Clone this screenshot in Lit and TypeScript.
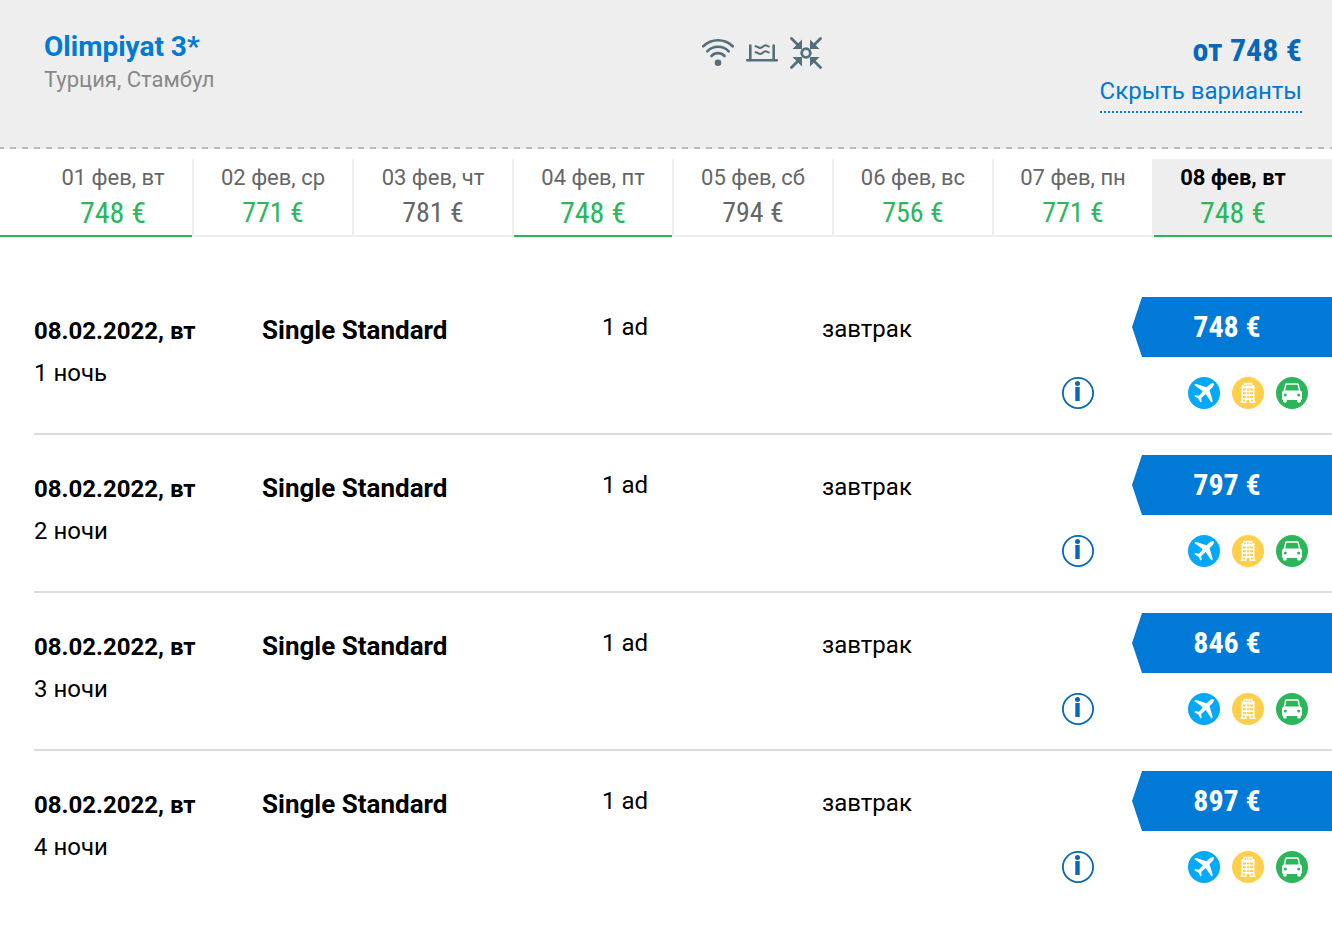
import { LitElement, html, css, svg } from "lit";
import { customElement } from "lit/decorators.js";
import { classMap } from "lit/directives/class-map.js";

interface Day {
  date: string;
  price: number;
  tone?: "low" | "best";
  active?: boolean;
}

const DAYS: Day[] = [
  { date: "01 фев, вт", price: 748, tone: "best" },
  { date: "02 фев, ср", price: 771, tone: "low" },
  { date: "03 фев, чт", price: 781 },
  { date: "04 фев, пт", price: 748, tone: "best" },
  { date: "05 фев, сб", price: 794 },
  { date: "06 фев, вс", price: 756, tone: "low" },
  { date: "07 фев, пн", price: 771, tone: "low" },
  { date: "08 фев, вт", price: 748, tone: "best", active: true },
];

const OFFERS = [
  { nights: "1 ночь", price: 748 },
  { nights: "2 ночи", price: 797 },
  { nights: "3 ночи", price: 846 },
  { nights: "4 ночи", price: 897 },
];

const wifi = svg`<svg viewBox="0 0 32 32" width="32" height="32" fill="none" stroke="#546e7a" stroke-width="2.6" stroke-linecap="round" role="img" aria-label="Wi-Fi">
  <path d="M1.3 9.3C9.5 1.3 22.500 1.300 30.700 9.300"/>
  <path d="M5.300 14.300C11.200 8.300 20.800 8.300 26.700 14.300"/>
  <path d="M9.500 19C13.200 15.200 18.800 15.200 22.500 19"/>
  <circle cx="16" cy="25.800" r="3.300" fill="#546e7a" stroke="none"/>
</svg>`;

const pool = svg`<svg viewBox="0 0 32 32" width="32" height="32" fill="none" stroke="#546e7a" stroke-width="2" stroke-linecap="round" role="img" aria-label="Бассейн">
  <path d="M1 23.300H31" stroke-width="2.400"/>
  <path d="M4.300 8.500V23M27.700 8.500V23" stroke-width="2.600"/>
  <path d="M9.500 9.200C12 9.200 12 11 14.200 11C17 11 17 8.200 19.500 8.200C21.500 8.200 21.500 9.500 22.800 9.500"/>
  <path d="M9.500 15.200C12 15.200 12 17 14.200 17C17 17 17 14.200 19.500 14.200C21.500 14.200 21.500 15.500 22.800 15.500"/>
</svg>`;

const center = svg`<svg viewBox="0 0 32 32" width="32" height="32" fill="none" stroke="#546e7a" stroke-width="2.800" stroke-linecap="round" role="img" aria-label="Центр">
  <circle cx="16" cy="16" r="4.300"/>
  <path d="M1.500 1.500L8 8M30.500 1.500L24 8M1.500 30.500L8 24M30.500 30.500L24 24"/>
  <path fill="#546e7a" stroke="none" d="M12 2.500V12H2.500ZM20 2.500V12H29.500ZM12 29.500V20H2.500ZM20 29.500V20H29.500Z"/>
</svg>`;

const plane = svg`<svg viewBox="0 0 32 32" width="32" height="32" role="img" aria-label="Перелёт">
  <circle cx="16" cy="16" r="16" fill="#03a9f9"/>
  <path fill="#fff" d="M25.700 6.200C24.500 5.600 22.600 6.500 21.300 7.800L18.600 10.300L7.500 6.700L6.300 8L14.800 14.200L11 18.800L7.400 18.100L6.300 19.200L10.300 21.600L12.600 25.600L13.700 24.500L13.200 20.900L17.700 17L23.400 25.500L24.800 24.300L21.600 13.200L24.200 10.500C25.500 9.200 26.400 7.200 25.700 6.200Z"/>
</svg>`;

const hotel = svg`<svg viewBox="0 0 32 32" width="32" height="32" role="img" aria-label="Отель">
  <circle cx="16" cy="16" r="16" fill="#ffce4b"/>
  <path fill="#fff" d="M11.500 5.800H20.500V8H22.500V24.500H23.500V26H8.500V24.500H9.500V8H11.500Z"/>
  <path fill="#ffce4b" d="M12.500 7.500H14V9H12.500ZM15.200 7.500H16.800V9H15.200ZM18 7.500H19.500V9H18ZM11 11.500H14V13.500H11ZM15 11.500H17V13.500H15ZM18 11.500H21V13.500H18ZM11 15.200H14V17.200H11ZM15 15.200H17V17.200H15ZM18 15.200H21V17.200H18ZM11 18.900H14V20.900H11ZM15 18.900H17V20.900H15ZM18 18.900H21V20.900H18ZM11 22.600H13V24.600H11ZM14.500 23H17.500V26H14.500ZM19 22.600H21V24.600H19Z"/>
</svg>`;

const car = svg`<svg viewBox="0 0 32 32" width="32" height="32" role="img" aria-label="Трансфер">
  <circle cx="16" cy="16" r="16" fill="#2bb65a"/>
  <path fill="#fff" fill-rule="evenodd" d="M10.800 6.300H21.200C22.200 6.300 22.800 6.800 23 7.700L24.300 13.600C25.500 14.200 26 15 26 16.300V22.500H24.800V24.500C24.800 26 21.300 26 21.300 24.500V22.900H10.700V24.500C10.700 26 7.200 26 7.200 24.500V22.500H6V16.300C6 15 6.500 14.200 7.700 13.600L9 7.700C9.200 6.800 9.800 6.300 10.800 6.300ZM11.300 7.800C10.700 7.800 10.400 8 10.300 8.600L9.200 13.500H22.800L21.700 8.600C21.600 8 21.300 7.800 20.700 7.800ZM9.300 16.500A1.500 1.500 0 1 0 9.300 19.500A1.500 1.500 0 1 0 9.300 16.500ZM22.700 16.500A1.500 1.500 0 1 0 22.700 19.500A1.500 1.500 0 1 0 22.700 16.500Z"/>
</svg>`;

const info = svg`<svg viewBox="0 0 32 32" width="32" height="32" aria-hidden="true">
  <circle cx="16" cy="16" r="15.100" fill="none" stroke="#0767bb" stroke-width="1.800"/>
  <circle cx="15.500" cy="6.500" r="2.500" fill="#0767bb"/>
  <path fill="#0767bb" d="M13.300 10H17.700V24H13.300Z"/>
</svg>`;

@customElement("app-root")
export class AppRoot extends LitElement {
  static styles = css`
    :host {
      display: block;
      font-family: Roboto, "Liberation Sans", sans-serif;
      font-size: 24px;
      line-height: 28px;
      color: #000;
      background: #fff;
    }
    * { box-sizing: border-box; }
    a { color: #0079d7; text-decoration: none; }
    button { font: inherit; border: 0; padding: 0; background: none; cursor: pointer; }
    svg { display: block; }
    h2, p, ul { margin: 0; padding: 0; }
    ul { list-style: none; }

    .hotel {
      display: grid;
      grid-template-columns: 658fr 600fr;
      padding: 32px 30px 36px 44px;
      background:
        repeating-linear-gradient(90deg, #bbb 0 4px, #eee 4px 10px, #bbb 10px 12px) bottom / 100% 2px no-repeat,
        #eee;
    }
    .name { font-size: 28px; line-height: 30px; font-weight: 700; }
    .place { padding-top: 2px; font-size: 22px; line-height: 32px; color: #888; }
    .side { display: flex; justify-content: space-between; align-items: flex-start; }
    .amenities { display: flex; gap: 12px; padding-top: 5px; }
    .total { display: flex; flex-direction: column; align-items: flex-end; }
    .from {
      font: 700 32px/36px "Roboto Condensed", Roboto, sans-serif;
      color: #0767bb;
    }
    .toggle {
      margin-top: 7px;
      padding-bottom: 4px;
      line-height: 32px;
      color: #0079d7;
      border-bottom: 2px dotted #0079d7;
    }

    .days { display: flex; padding-top: 10px; }
    .day {
      flex: 1 1 0;
      box-sizing: content-box;
      border-right: 2px solid #eee;
      box-shadow: inset 0 -2px #eee;
    }
    .day:first-child { padding-left: 34px; }
    .day:last-child { padding-right: 20px; border-right: 0; }
    .pick {
      display: block;
      width: 100%;
      padding-top: 2px;
      text-align: center;
      font-size: 22px;
      line-height: 34px;
      color: #666;
    }
    .cost {
      display: block;
      font-family: "Roboto Condensed", Roboto, sans-serif;
      font-size: 28px;
      line-height: 36px;
      padding-bottom: 6px;
    }
    .low .cost, .best .cost { color: #2bb65a; }
    .best .cost { font-size: 30px; }
    .best { box-shadow: inset 0 -2px #2bb65a; }
    .active { background: #eee; }
    .active .pick { font-weight: 700; color: #000; }
    .active .cost { font-weight: 400; }

    .offers { padding: 40px 0 30px 34px; }
    .offer {
      display: grid;
      grid-template-columns: 228fr 340fr 220fr 240fr 270px;
      padding: 20px 0 24px;
      border-bottom: 2px solid #dcdcdc;
    }
    .offer:last-child { border-bottom: 0; }
    .date { padding-top: 20px; font-weight: 700; }
    .nights { padding-top: 14px; }
    .room { padding-top: 19px; font-size: 26px; font-weight: 700; }
    .guests { padding-top: 16px; }
    .meal { padding-top: 18px; }
    .buy {
      display: block;
      width: 200px;
      height: 60px;
      margin-left: auto;
      padding-right: 10px;
      color: #fff;
      background: #0079d7;
      clip-path: polygon(10px 0, 100% 0, 100% 100%, 10px 100%, 0 50%);
      font: 700 30px/60px "Roboto Condensed", Roboto, sans-serif;
      text-align: center;
    }
    .extras { display: flex; justify-content: space-between; padding: 20px 24px 0 0; }
    .included { display: flex; gap: 12px; }
  `;

  render() {
    return html`
      <header class="hotel">
        <div>
          <h2 class="name"><a href="#">Olimpiyat 3*</a></h2>
          <p class="place">Турция, Стамбул</p>
        </div>
        <div class="side">
          <div class="amenities">${wifi}${pool}${center}</div>
          <div class="total">
            <span class="from">от 748 €</span>
            <button class="toggle">Скрыть варианты</button>
          </div>
        </div>
      </header>

      <ul class="days">
        ${DAYS.map((d) => html`
          <li class=${classMap({ day: true, low: d.tone === "low", best: d.tone === "best", active: !!d.active })}>
            <button class="pick">${d.date}<span class="cost">${d.price} €</span></button>
          </li>`)}
      </ul>

      <ul class="offers">
        ${OFFERS.map((o) => html`
          <li class="offer">
            <div>
              <p class="date">08.02.2022, вт</p>
              <p class="nights">${o.nights}</p>
            </div>
            <div class="room">Single Standard</div>
            <div class="guests">1 ad</div>
            <div class="meal">завтрак</div>
            <div>
              <button class="buy">${o.price} €</button>
              <div class="extras">
                <button aria-label="Информация">${info}</button>
                <div class="included">${plane}${hotel}${car}</div>
              </div>
            </div>
          </li>`)}
      </ul>
    `;
  }
}
